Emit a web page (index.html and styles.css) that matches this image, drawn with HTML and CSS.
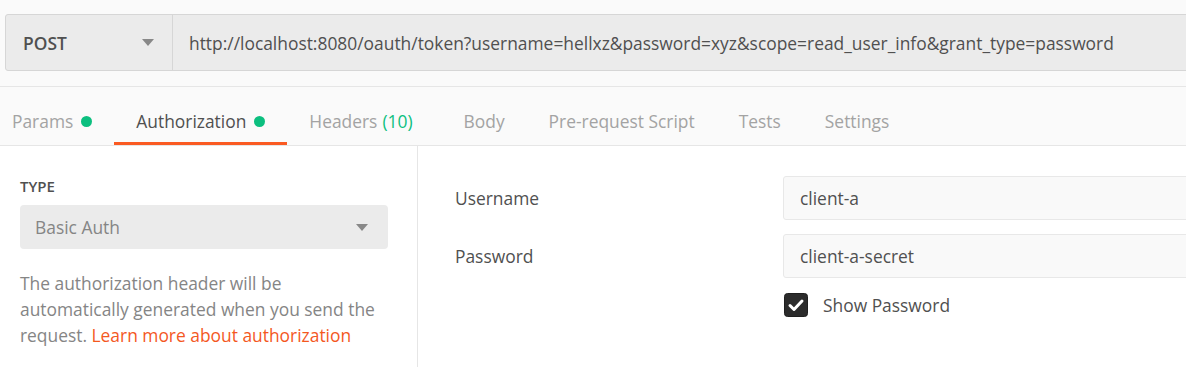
FILE: index.html
```html
<!DOCTYPE html>
<html lang="en">
<head>
  <meta charset="UTF-8">
  <meta name="viewport" content="width=device-width, initial-scale=1.0">
  <title>Request - Authorization</title>
  <link rel="stylesheet" href="styles.css">
</head>
<body>
  <div class="request-bar">
    <div class="url-group">
      <div class="method">
        <span>POST</span>
        <span class="caret"></span>
      </div>
      <div class="url">http://localhost:8080/oauth/token?username=hellxz&amp;password=xyz&amp;scope=read_user_info&amp;grant_type=password</div>
    </div>
  </div>

  <div class="tabs">
    <div class="tab">Params <span class="dot"></span></div>
    <div class="tab active">Authorization <span class="dot"></span></div>
    <div class="tab tab-headers">Headers <span class="count">(10)</span></div>
    <div class="tab">Body</div>
    <div class="tab">Pre-request Script</div>
    <div class="tab">Tests</div>
    <div class="tab">Settings</div>
  </div>

  <div class="auth">
    <div class="auth-side">
      <div class="side-label">TYPE</div>
      <div class="select">
        <span>Basic Auth</span>
        <span class="caret"></span>
      </div>
      <p class="help">
        The authorization header will be automatically generated when you send the
        request. <a href="#" class="link">Learn more about authorization</a>
      </p>
    </div>

    <div class="auth-fields">
      <label class="field-label" for="username">Username</label>
      <input class="field-input" id="username" type="text" value="client-a">

      <label class="field-label" for="password">Password</label>
      <input class="field-input" id="password" type="text" value="client-a-secret">

      <div></div>
      <div class="show-pass">
        <span class="checkbox">
          <svg width="24" height="24" viewBox="0 0 24 24">
            <rect x="0.5" y="0.5" width="23" height="23" rx="3" fill="#2b2b2b" stroke="#1f1f1f"/>
            <path d="M6 12.5 L10 16.5 L18 8" fill="none" stroke="#fff" stroke-width="3" stroke-linecap="round" stroke-linejoin="round"/>
          </svg>
        </span>
        Show Password
      </div>
    </div>
  </div>
</body>
</html>
```

FILE: styles.css
```css
body {
  margin: 0;
  background-color: #fafafa;
  font-family: "Open Sans", "Liberation Sans", sans-serif;
  color: #505050;
  overflow: hidden;
}
.request-bar {
  padding: 14px 0 15px 5px;
  border-bottom: 1px solid #e6e6e6;
}
.url-group {
  display: flex;
  height: 57px;
  box-sizing: border-box;
  margin-right: -10px;
  background-color: #ebebeb;
  border: 1px solid #d6d6d6;
  border-radius: 3px;
}
.method {
  width: 167px;
  box-sizing: border-box;
  display: flex;
  align-items: center;
  justify-content: space-between;
  padding: 0 18px 0 17px;
  border-right: 1px solid #d6d6d6;
  font-weight: 600;
  font-size: 17.4px;
}
.caret {
  width: 0;
  height: 0;
  border-left: 6px solid transparent;
  border-right: 6px solid transparent;
  border-top: 7px solid #888888;
}
.url {
  display: flex;
  align-items: center;
  padding-left: 16px;
  white-space: nowrap;
  font-size: 17.4px;
}
.tabs {
  display: flex;
  margin-left: -10px;
  border-bottom: 1px solid #e6e6e6;
}
.tab {
  display: flex;
  align-items: center;
  padding: 22px 22px 9px;
  line-height: 24px;
  font-size: 17.4px;
  color: #a3a3a3;
  border-bottom: 3px solid transparent;
  white-space: nowrap;
}
.tab.active {
  color: #505050;
  border-bottom-color: #fa5a22;
}
.tab-headers {
  margin-right: 7px;
}
.dot {
  width: 11px;
  height: 11px;
  border-radius: 50%;
  background-color: #0cbf7f;
  margin-left: 8px;
}
.count {
  color: #0cbf7f;
  margin-left: 5px;
}
.auth {
  display: flex;
  background-color: #ffffff;
  height: 230px;
}
.auth-side {
  width: 418px;
  box-sizing: border-box;
  padding: 30px 29px 0 20px;
  border-right: 1px solid #e6e6e6;
}
.side-label {
  font-size: 15px;
  font-weight: 600;
  line-height: 20px;
}
.select {
  display: flex;
  align-items: center;
  justify-content: space-between;
  height: 44px;
  box-sizing: border-box;
  margin-top: 9px;
  padding: 0 20px 0 15px;
  background-color: #ebebeb;
  border-radius: 4px;
  color: #858585;
  font-size: 17.4px;
}
.help {
  margin: 21px 0 0;
  font-size: 17.4px;
  line-height: 26px;
  color: #858585;
}
.link {
  color: #f4581f;
  text-decoration: none;
}
.auth-fields {
  flex: 1;
  display: grid;
  grid-template-columns: 328px 1fr;
  row-gap: 14px;
  align-items: center;
  align-content: start;
  padding: 30px 0 0 37px;
  margin-right: -20px;
}
.field-label {
  font-size: 17.4px;
}
.field-input {
  height: 44px;
  box-sizing: border-box;
  padding: 0 16px;
  background-color: #f9f9f9;
  border: 1px solid #e8e8e8;
  border-radius: 3px;
  font-family: inherit;
  font-size: 17.4px;
  color: #505050;
}
.show-pass {
  display: flex;
  align-items: center;
  margin-top: 1px;
  font-size: 17.4px;
}
.checkbox {
  display: flex;
  margin: 0 15px 0 1px;
}
```
